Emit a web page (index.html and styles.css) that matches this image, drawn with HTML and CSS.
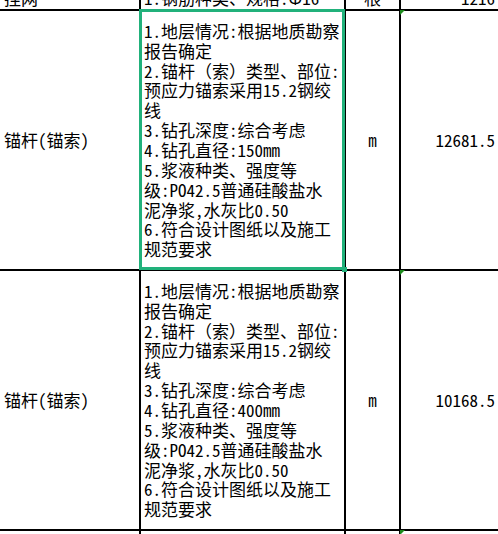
FILE: index.html
```html
<!DOCTYPE html>
<html lang="zh-CN">
<head>
<meta charset="utf-8">
<title>工程量清单</title>
<link rel="stylesheet" href="styles.css">
</head>
<body>
<div class="sheet">
  <div class="grid">
    <div class="cell name top">挂网</div>
    <div class="cell desc top">1.钢筋种类、规格:Φ16</div>
    <div class="cell unit top">根</div>
    <div class="cell qty top">1216</div>

    <div class="cell name">锚杆(锚索)</div>
    <div class="cell desc selected">
      <div class="lines">1.地层情况:根据地质勘察<br>报告确定<br>2.锚杆（索）类型、部位:<br>预应力锚索采用15.2钢绞<br>线<br>3.钻孔深度:综合考虑<br>4.钻孔直径:150mm<br>5.浆液种类、强度等<br>级:PO42.5普通硅酸盐水<br>泥净浆,水灰比0.50<br>6.符合设计图纸以及施工<br>规范要求</div>
      <span class="handle"></span>
    </div>
    <div class="cell unit">m</div>
    <div class="cell qty"><span class="flag"></span>12681.5</div>

    <div class="cell name">锚杆(锚索)</div>
    <div class="cell desc">
      <div class="lines">1.地层情况:根据地质勘察<br>报告确定<br>2.锚杆（索）类型、部位:<br>预应力锚索采用15.2钢绞<br>线<br>3.钻孔深度:综合考虑<br>4.钻孔直径:400mm<br>5.浆液种类、强度等<br>级:PO42.5普通硅酸盐水<br>泥净浆,水灰比0.50<br>6.符合设计图纸以及施工<br>规范要求</div>
    </div>
    <div class="cell unit">m</div>
    <div class="cell qty"><span class="flag"></span>10168.5</div>

    <div class="cell name"></div>
    <div class="cell desc"></div>
    <div class="cell unit"></div>
    <div class="cell qty"><span class="flag"></span></div>
  </div>
</div>
</body>
</html>
```
FILE: styles.css
```css
html, body {
  margin: 0;
  padding: 0;
  background: #fff;
}

.sheet {
  width: 498px;
  height: 534px;
  overflow: hidden;
}

.grid {
  display: grid;
  grid-template-columns: 139px 203px 53px 1fr;
  grid-template-rows: 30px 258px 258px 40px;
  gap: 2px;
  background: #000;
  margin-top: -21px;
  font-family: "Noto Sans Mono CJK SC", "Noto Sans CJK SC", monospace;
  font-size: 17px;
  color: #000;
}

.cell {
  background: #fff;
  display: flex;
  align-items: center;
  position: relative;
  white-space: nowrap;
  line-height: 19.85px;
}

.cell.top {
  align-items: flex-end;
  padding-bottom: 1px;
}

.name {
  padding-left: 4px;
}

.desc {
  padding-left: 3px;
}

.unit {
  justify-content: center;
}

.qty {
  justify-content: flex-end;
  padding-right: 3px;
}

.selected::after {
  content: "";
  position: absolute;
  top: -2px;
  left: -2px;
  right: -1px;
  bottom: -1px;
  border: 3px solid #21b17b;
  z-index: 2;
  pointer-events: none;
}

.handle {
  position: absolute;
  right: -3px;
  bottom: -3px;
  width: 5px;
  height: 5px;
  background: #21b17b;
  z-index: 3;
}

.flag {
  position: absolute;
  top: -1px;
  left: -1px;
  width: 0;
  height: 0;
  border-top: 5px solid #1c8a1c;
  border-right: 5px solid transparent;
}
```
